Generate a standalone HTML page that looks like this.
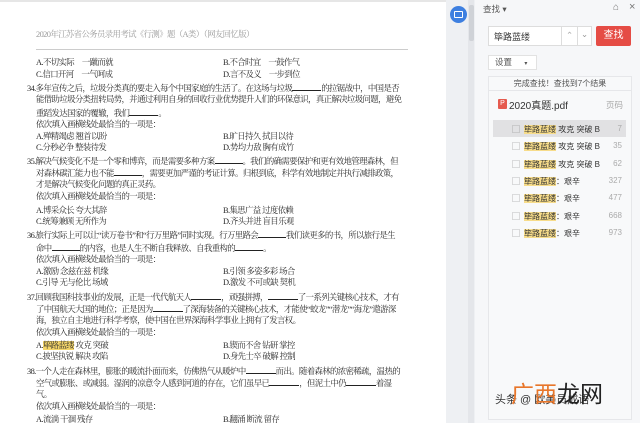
<!DOCTYPE html>
<html><head><meta charset="utf-8"><style>
*{margin:0;padding:0;box-sizing:border-box}
body{width:640px;height:423px;overflow:hidden;background:#fff;position:relative;font-family:"Liberation Serif","Noto Serif CJK SC",serif;color:#2a2a2a}
.l{position:absolute;font-size:8.4px;letter-spacing:-0.6px;white-space:nowrap;line-height:12px}
.u{display:inline-block;border-bottom:1px solid #222;height:9px}
.s{font-family:"Liberation Sans","Noto Sans CJK SC",sans-serif}
.r{position:absolute;left:512px;white-space:nowrap;font-size:8px}
.r i{font-style:normal;color:#888;margin-right:4px}
.r b{font-weight:normal;background:#f7dc8a}
.n{position:absolute;left:600px;width:22px;text-align:right;color:#aaa;font-size:8px}
</style></head><body>
<div style="position:absolute;left:0;top:0;width:446px;height:2px;background:#e6e6e6"></div>
<div class="l" style="left:36px;top:29px;color:#999">2020年江苏省公务员录用考试《行测》题（A类）（网友回忆版）</div>
<div style="position:absolute;left:36px;top:49px;width:372px;height:1px;background:#ccc"></div>

<div class="l" style="left:36px;top:57px">A.不切实际　一蹴而就</div><div class="l" style="left:223px;top:57px">B.不合时宜　一鼓作气</div>
<div class="l" style="left:36px;top:69px">C.信口开河　一气呵成</div><div class="l" style="left:223px;top:69px">D.言不及义　一步到位</div>
<div class="l" style="left:27px;top:82px">34.多年宣传之后，垃圾分类真的要走入每个中国家庭的生活了。在这场与垃圾<span class="u" style="width:29px"></span>的拉锯战中，中国是否</div>
<div class="l" style="left:36px;top:94px">能借助垃圾分类扭转局势，并通过利用自身的回收行业优势提升人们的环保意识，真正解决垃圾问题，避免</div>
<div class="l" style="left:36px;top:107px">重蹈发达国家的覆辙，我们<span class="u" style="width:29px"></span>。</div>
<div class="l" style="left:36px;top:119px">依次填入画横线处最恰当的一项是：</div>
<div class="l" style="left:36px;top:131px">A.殚精竭虑 翘首以盼</div><div class="l" style="left:223px;top:131px">B.旷日持久 拭目以待</div>
<div class="l" style="left:36px;top:142px">C.分秒必争 整装待发</div><div class="l" style="left:223px;top:142px">D.势均力敌 胸有成竹</div>
<div class="l" style="left:27px;top:155px">35.解决气候变化不是一个零和博弈，而是需要多种方案<span class="u" style="width:28px"></span>。我们的确需要保护和更有效地管理森林，但</div>
<div class="l" style="left:36px;top:167px">对森林碳汇能力也不能<span class="u" style="width:28px"></span>，需要更加严谨的考证计算。归根到底，科学有效地制定并执行减排政策，</div>
<div class="l" style="left:36px;top:179px">才是解决气候变化问题的真正灵药。</div>
<div class="l" style="left:36px;top:191px">依次填入画横线处最恰当的一项是：</div>
<div class="l" style="left:36px;top:205px">A.博采众长 夸大其辞</div><div class="l" style="left:223px;top:205px">B.集思广益 过度依赖</div>
<div class="l" style="left:36px;top:216px">C.统筹兼顾 无所作为</div><div class="l" style="left:223px;top:216px">D.齐头并进 盲目乐观</div>
<div class="l" style="left:27px;top:229px">36.旅行实际上可以让“读万卷书”和“行万里路”同时实现。行万里路会<span class="u" style="width:28px"></span>我们读更多的书，所以旅行是生</div>
<div class="l" style="left:36px;top:242px">命中<span class="u" style="width:28px"></span>的内容，也是人生不断自我释放、自我重构的<span class="u" style="width:28px"></span>。</div>
<div class="l" style="left:36px;top:254px">依次填入画横线处最恰当的一项是：</div>
<div class="l" style="left:36px;top:266px">A.激励 念兹在兹 机缘</div><div class="l" style="left:223px;top:266px">B.引领 多姿多彩 场合</div>
<div class="l" style="left:36px;top:277px">C.引导 无与伦比 场域</div><div class="l" style="left:223px;top:277px">D.激发 不可或缺 契机</div>
<div class="l" style="left:27px;top:291px">37.回顾我国科技事业的发展，正是一代代航天人<span class="u" style="width:30px"></span>，顽强拼搏，<span class="u" style="width:30px"></span>了一系列关键核心技术，才有</div>
<div class="l" style="left:36px;top:303px">了中国航天大国的地位；正是因为<span class="u" style="width:30px"></span>了深海装备的关键核心技术，才能使“蛟龙”“潜龙”“海龙”遨游深</div>
<div class="l" style="left:36px;top:315px">海，独立自主地进行科学考察，使中国在世界深海科学事业上拥有了发言权。</div>
<div class="l" style="left:36px;top:327px">依次填入画横线处最恰当的一项是：</div>
<div class="l" style="left:36px;top:340px">A.<span style="background:#f5d66a">筚路蓝缕</span> 攻克 突破</div><div class="l" style="left:223px;top:340px">B.锲而不舍 钻研 掌控</div>
<div class="l" style="left:36px;top:351px">C.披坚执锐 解决 攻陷</div><div class="l" style="left:223px;top:351px">D.身先士卒 破解 控制</div>
<div class="l" style="left:27px;top:365px">38.一个人走在森林里，膨胀的暖流扑面而来，仿佛热气从暖炉中<span class="u" style="width:30px"></span>而出。随着森林的浓密稀疏，温热的</div>
<div class="l" style="left:36px;top:377px">空气或膨胀、或减弱。湿润的凉意令人感到河道的存在，它们虽早已<span class="u" style="width:30px"></span>，但泥土中仍<span class="u" style="width:30px"></span>着湿</div>
<div class="l" style="left:36px;top:389px">气。</div>
<div class="l" style="left:36px;top:401px">依次填入画横线处最恰当的一项是：</div>
<div class="l" style="left:36px;top:414px">A.流淌 干涸 残存</div><div class="l" style="left:223px;top:414px">B.翻涌 断流 留存</div>

<div style="position:absolute;left:446px;top:0;width:29px;height:423px;background:#eef0f3"></div>
<div style="position:absolute;left:468px;top:0;width:6px;height:423px;background:#e4e6ea"></div>
<div style="position:absolute;left:469px;top:5px;width:5px;height:36px;background:#cfd2d7;border-radius:2px"></div>
<div style="position:absolute;left:450px;top:6px;width:17px;height:17px;border-radius:50%;background:#3d7fe0"></div>
<div style="position:absolute;left:454px;top:11px;width:9px;height:7px;border:1.5px solid #fff;border-radius:1px"></div>

<div class="s" style="position:absolute;left:475px;top:0;width:165px;height:423px;background:#f6f7f9;font-size:8.5px;color:#333">
 <div style="position:absolute;left:8px;top:3px;color:#555">查找 ▾</div>
 <div style="position:absolute;left:138px;top:2px;color:#777;font-size:10px">⌂</div>
 <div style="position:absolute;left:154px;top:1px;color:#777;font-size:11px">×</div>
 <div style="position:absolute;left:13px;top:26px;width:104px;height:20px;border:1px solid #ddd;background:#fff"></div>
 <div style="position:absolute;left:19px;top:30px;font-size:9px">筚路蓝缕</div>
 <div style="position:absolute;left:86px;top:27px;width:1px;height:18px;background:#ddd"></div>
 <div style="position:absolute;left:102px;top:27px;width:1px;height:18px;background:#ddd"></div>
 <div style="position:absolute;left:91px;top:30px;color:#aaa">⌃</div>
 <div style="position:absolute;left:106px;top:29px;color:#999">⌄</div>
 <div style="position:absolute;left:121px;top:26px;width:35px;height:20px;background:#e54c45;border-radius:2px;color:#fff;font-size:10px;text-align:center;line-height:20px">查找</div>
 <div style="position:absolute;left:13px;top:55px;width:49px;height:15px;border:1px solid #e2e2e2;background:#fff;color:#555;padding-left:6px;line-height:13px">设置 <span style="margin-left:10px;font-size:6px">▾</span></div>
 <div style="position:absolute;left:13px;top:76px;width:144px;height:344px;border:1px solid #e6e7ea;background:#f8f9fa"></div>
 <div style="position:absolute;left:13px;top:77px;width:144px;height:14px;border-bottom:1px solid #e6e7ea;text-align:center;color:#555;font-size:8px;line-height:14px">完成查找！查找到7个结果</div>
 <div style="position:absolute;left:23px;top:99px;width:9px;height:10px;background:#e55a4e;border-radius:1px;color:#fff;font-size:7px;text-align:center;line-height:10px">P</div>
 <div style="position:absolute;left:34px;top:97px;font-size:10px">2020真题.pdf</div>
 <div style="position:absolute;left:131px;top:99px;color:#aaa">页码</div>
 <div style="position:absolute;left:18px;top:120px;width:133px;height:17px;background:#e1e1e3"></div>
</div>
<div class="s" style="position:absolute;left:0;top:0;color:#333">
 <div class="r" style="top:124px"><i>▢</i><b>筚路蓝缕</b> 攻克 突破 B</div><div class="n" style="top:124px">7</div>
 <div class="r" style="top:141px"><i>▢</i><b>筚路蓝缕</b> 攻克 突破 B</div><div class="n" style="top:141px">35</div>
 <div class="r" style="top:159px"><i>▢</i><b>筚路蓝缕</b> 攻克 突破 B</div><div class="n" style="top:159px">62</div>
 <div class="r" style="top:176px"><i>▢</i><b>筚路蓝缕</b>：艰辛</div><div class="n" style="top:176px">327</div>
 <div class="r" style="top:193px"><i>▢</i><b>筚路蓝缕</b>：艰辛</div><div class="n" style="top:193px">477</div>
 <div class="r" style="top:211px"><i>▢</i><b>筚路蓝缕</b>：艰辛</div><div class="n" style="top:211px">668</div>
 <div class="r" style="top:228px"><i>▢</i><b>筚路蓝缕</b>：艰辛</div><div class="n" style="top:228px">973</div>
 <div style="position:absolute;left:495px;top:391px;font-size:11px;color:#333;white-space:nowrap">头条 @ 欧美员成语</div>
 <div style="position:absolute;left:511px;top:377px;font-size:23px;line-height:30px;color:#e8762a;white-space:nowrap;font-family:'Noto Sans CJK SC',sans-serif">广西<span style="color:#222">龙网</span></div>
</div>
</body></html>
